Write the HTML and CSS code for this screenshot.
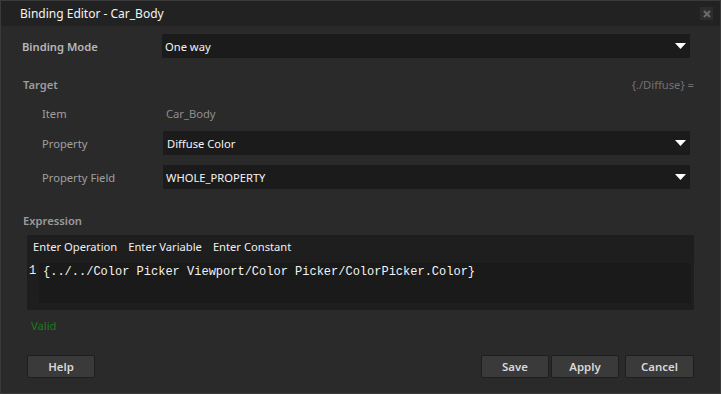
FILE: index.html
```html
<!DOCTYPE html>
<html>
<head>
<meta charset="utf-8">
<link rel="stylesheet" href="styles.css">
</head>
<body>
<div class="window">
  <div class="titlebar">
    <span class="title">Binding Editor - Car_Body</span>
    <span class="close"><svg width="10" height="10" viewBox="0 0 10 10"><path d="M2 2 L8 8 M8 2 L2 8" stroke="#6a6a6a" stroke-width="2.2"/></svg></span>
  </div>
  <div class="content">
    <div class="row mode-row">
      <span class="label strong">Binding Mode</span>
      <div class="dropdown"><span>One way</span><svg class="arrow" width="11" height="7" viewBox="0 0 11 7"><path d="M0 0 H11 L5.5 6 Z" fill="#fff"/></svg></div>
    </div>
    <div class="target-head">
      <span class="section">Target</span>
      <span class="hint">{./Diffuse} =</span>
    </div>
    <div class="row sub item-row">
      <span class="label">Item</span>
      <span class="value">Car_Body</span>
    </div>
    <div class="row sub prop-row">
      <span class="label">Property</span>
      <div class="dropdown"><span>Diffuse Color</span><svg class="arrow" width="11" height="7" viewBox="0 0 11 7"><path d="M0 0 H11 L5.5 6 Z" fill="#fff"/></svg></div>
    </div>
    <div class="row sub field-row">
      <span class="label">Property Field</span>
      <div class="dropdown"><span class="caps">WHOLE_PROPERTY</span><svg class="arrow" width="11" height="7" viewBox="0 0 11 7"><path d="M0 0 H11 L5.5 6 Z" fill="#fff"/></svg></div>
    </div>
    <div class="section expr-label">Expression</div>
    <div class="expr-box">
      <div class="toolbar"><span>Enter Operation</span><span>Enter Variable</span><span>Enter Constant</span></div>
      <div class="editor">
        <span class="lineno">1</span>
        <div class="code-area"><span class="code">{../../Color Picker Viewport/Color Picker/ColorPicker.Color}</span></div>
      </div>
    </div>
    <div class="valid">Valid</div>
    <div class="buttons">
      <button class="btn">Help</button>
      <div class="right">
        <button class="btn">Save</button>
        <button class="btn">Apply</button>
        <button class="btn cancel">Cancel</button>
      </div>
    </div>
  </div>
</div>
</body>
</html>
```

FILE: styles.css
```css
* { box-sizing: border-box; }
html, body { margin: 0; padding: 0; background: #2a2a2a; }
body { font-family: "Noto Sans", "Open Sans", sans-serif; font-size: 11.2px; }
.window {
  width: 721px; height: 394px;
  background: #2a2a2a;
  border: 1px solid #3a3a3a;
  display: flex; flex-direction: column;
}
.titlebar {
  height: 25px; flex: none;
  background: #222222;
  display: flex; align-items: center; justify-content: space-between;
  padding: 0 7px 0 19px;
}
.title { color: #f4f4f4; font-size: 12px; }
.close {
  width: 13px; height: 13px; background: #2d2d2d;
  display: flex; align-items: center; justify-content: center;
}
.content { padding: 0 26px 0 21px; display: flex; flex-direction: column; }
.row { display: flex; align-items: center; flex: none; }
.label { color: #a8a8a8; width: 140px; flex: none; }
.label.strong { color: #b8b8b8; font-weight: 600; }
.mode-row { margin-top: 8px; height: 24px; }
.dropdown {
  flex: 1; height: 24px; background: #1b1b1b;
  display: flex; align-items: center; justify-content: space-between;
  padding: 0 4px 0 3px; color: #f4f4f4;
  margin-right: 4px;
}
.arrow { flex: none; }
.target-head {
  display: flex; justify-content: space-between; align-items: center;
  margin-top: 16px; height: 20px; padding-left: 1px;
}
.section { color: #9c9c9c; font-weight: 600; }
.hint { color: #727272; }
.sub .label { padding-left: 20px; color: #a0a0a0; width: 141px; }
.item-row { height: 24px; margin-top: 7px; }
.value { color: #8e8e8e; padding-left: 3px; }
.prop-row { margin-top: 6px; height: 24px; }
.prop-row .dropdown { padding-left: 4px; }
.field-row { margin-top: 10px; height: 24px; }
.expr-label { margin-top: 22px; height: 20px; line-height: 20px; padding-left: 1px; }
.expr-box {
  margin-top: 4px; margin-left: 5px;
  height: 75px; background: #1e1e1e;
  display: flex; flex-direction: column;
  padding: 0 3px 7px 2px;
}
.toolbar { height: 28px; padding-bottom: 5px; display: flex; align-items: center; gap: 11px; color: #f0f0f0; padding-left: 4px; }
.editor { flex: 1; display: flex; }
.lineno {
  font-family: "Liberation Mono", monospace; font-size: 12px; color: #f0f0f0;
  width: 10px; padding-top: 1px; flex: none; line-height: 14px;
}
.code-area { flex: 1; background: #1a1a1a; padding: 1px 0 0 4px; line-height: 14px; }
.code { font-family: "Liberation Mono", monospace; font-size: 12px; color: #f4f4f4; white-space: pre; }
.valid { color: #1d7a1d; margin-top: 7px; padding-left: 9px; height: 18px; line-height: 18px; }
.buttons { display: flex; justify-content: space-between; margin-top: 20px; padding-left: 5px; }
.right { display: flex; gap: 2px; }
.btn {
  width: 68px; height: 23px;
  background: #3a3a3a; border: 1px solid #1e1e1e; border-radius: 2px;
  color: #d8d8d8; font-family: "Noto Sans", "Open Sans", sans-serif; font-size: 11.4px; font-weight: 600;
  padding: 0; cursor: default;
}
.btn.cancel { margin-left: 4px; width: 69px; }
```
